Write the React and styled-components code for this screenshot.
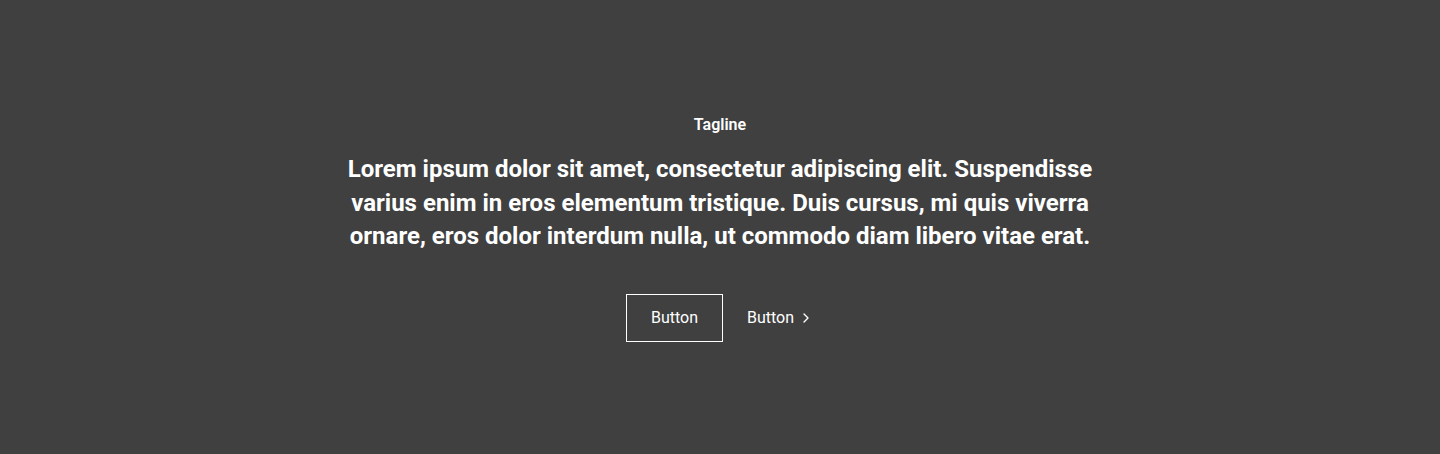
import React from "react";
import styled, { createGlobalStyle } from "styled-components";

const GlobalStyle = createGlobalStyle`
  html, body {
    margin: 0;
    padding: 0;
    background: #404040;
  }
  * {
    box-sizing: border-box;
  }
`;

const ChevronRight = () => (
  <svg width="16" height="16" viewBox="0 0 24 24" fill="none" stroke="currentColor" strokeWidth="2" strokeLinecap="round" strokeLinejoin="round">
    <path d="M9 6l6 6-6 6" />
  </svg>
);

const App = () => {
  return (
    <Section>
      <GlobalStyle />
      <Content>
        {/* Tagline */}
        <Tagline>Tagline</Tagline>

        {/* Heading */}
        <Heading>
          Lorem ipsum dolor sit amet, consectetur adipiscing elit. Suspendisse
          varius enim in eros elementum tristique. Duis cursus, mi quis viverra
          ornare, eros dolor interdum nulla, ut commodo diam libero vitae erat.
        </Heading>

        {/* Actions */}
        <Actions>
          <Button variant="outline">Button</Button>
          <Button variant="link">
            Button
            <ChevronRight />
          </Button>
        </Actions>
      </Content>
    </Section>
  );
};

const Section = styled.section`
  display: flex;
  justify-content: center;
  padding: 113px 64px 111px;
  background: #404040;
  color: #ffffff;
  font-family: Roboto, "Liberation Sans", sans-serif;
`;
const Content = styled.div`
  display: flex;
  flex-direction: column;
  align-items: center;
  width: 100%;
  max-width: 768px;
  text-align: center;
`;
const Tagline = styled.p`
  margin: 0 0 16px;
  font-size: 16px;
  font-weight: 600;
  line-height: 1.5;
`;
const Heading = styled.h2`
  margin: 0;
  font-size: 24px;
  font-weight: 700;
  line-height: 1.4;
`;
const Actions = styled.div`
  display: flex;
  align-items: center;
  justify-content: center;
  gap: 24px;
  margin-top: 40px;
`;
const Button = styled.button`
  display: inline-flex;
  align-items: center;
  gap: ${(p) => (p.variant === "link" ? "4px" : "8px")};
  height: 48px;
  padding: ${(p) => (p.variant === "link" ? "0" : "12px 24px")};
  background: transparent;
  border: ${(p) => (p.variant === "link" ? "none" : "1px solid #ffffff")};
  color: #ffffff;
  font-family: Roboto, "Liberation Sans", sans-serif;
  font-size: 16px;
  line-height: 1.5;

  &:hover {
    cursor: pointer;
  }
`;

export default App;
